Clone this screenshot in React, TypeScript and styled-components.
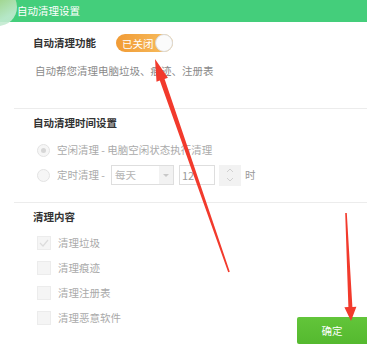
import React from 'react';
import styled, { createGlobalStyle } from 'styled-components';

const GlobalStyle = createGlobalStyle`
	html, body {
		margin: 0;
		padding: 0;
		background: #fff;
	}
	body {
		font-family: "Noto Sans CJK SC", "Noto Sans", sans-serif;
		font-size: 10.5px;
	}
`;

const Dialog = styled.div`
	position: relative;
	width: 367px;
	height: 353px;
	overflow: hidden;
	background: #fff;
	display: flex;
	flex-direction: column;
`;

const TitleBar = styled.div`
	position: relative;
	height: 22px;
	line-height: 21px;
	padding-left: 17px;
	background: #44ce7b;
	color: #fff;
	font-size: 10.5px;
	flex: none;
`;

const Blob = styled.div`
	position: absolute;
	left: -21px;
	top: -12px;
	width: 38px;
	height: 38px;
	border-radius: 50%;
	background: linear-gradient(150deg, #9cbf58 0%, #a9d58c 35%, #c2ead0 75%);
	opacity: 0.9;
`;

const TitleText = styled.span`
	position: relative;
`;

const Section = styled.div<{ $top: number; $bottom: number; $last?: boolean }>`
	margin-left: ${p => (p.$last ? 0 : 14)}px;
	padding: ${p => p.$top}px 0 ${p => p.$bottom}px 19px;
	border-bottom: ${p => (p.$last ? 'none' : '1px solid #ececec')};
`;

const SectionTitle = styled.div`
	font-size: 10.5px;
	line-height: 14px;
	font-weight: bold;
	color: #333;
`;

const SwitchRow = styled.div`
	display: flex;
	align-items: center;
	height: 18px;
	gap: 20px;
`;

const Switch = styled.div`
	position: relative;
	width: 57px;
	height: 18px;
	border-radius: 9px;
	background: linear-gradient(90deg, #f19b35, #f7bf62);
	box-sizing: border-box;
	display: flex;
	align-items: center;
	padding-left: 6px;
	color: #fff;
	font-size: 10.5px;
`;

const Knob = styled.div`
	position: absolute;
	right: 0;
	top: 0;
	width: 18px;
	height: 18px;
	box-sizing: border-box;
	border-radius: 50%;
	background: #fbfbfb;
	border: 1px solid #d9d9d9;
`;

const Desc = styled.div`
	margin-top: 12px;
	margin-left: 2px;
	line-height: 14px;
	color: #8a8a8a;
`;

const OptionList = styled.div<{ $mt: number; $gap: number }>`
	margin-top: ${p => p.$mt}px;
	margin-left: 4px;
	display: flex;
	flex-direction: column;
	gap: ${p => p.$gap}px;
`;

const Option = styled.div<{ $h: number }>`
	display: flex;
	align-items: center;
	height: ${p => p.$h}px;
	gap: 7px;
	color: #aaa;
	line-height: 14px;
`;

const Radio = styled.span<{ $on?: boolean }>`
	width: 13px;
	height: 13px;
	box-sizing: border-box;
	border-radius: 50%;
	border: 1px solid #e3e3e3;
	background: #f6f6f6;
	display: flex;
	align-items: center;
	justify-content: center;
	flex: none;
	&::after {
		content: '';
		width: 5px;
		height: 5px;
		border-radius: 50%;
		background: ${p => (p.$on ? '#d6d6d6' : 'transparent')};
	}
`;

const Check = styled.span`
	width: 14px;
	height: 14px;
	box-sizing: border-box;
	border: 1px solid #ececec;
	background: #f5f5f5;
	display: flex;
	align-items: center;
	justify-content: center;
	flex: none;
`;

const Select = styled.div`
	margin-left: -1px;
	width: 63px;
	height: 20px;
	box-sizing: border-box;
	border: 1px solid #dedede;
	display: flex;
	align-items: center;
	color: #b5b5b5;
	padding-left: 3px;
`;

const SelectText = styled.span`
	flex: 1;
`;

const SelectArrow = styled.span`
	width: 14px;
	height: 18px;
	background: #f2f2f2;
	display: flex;
	align-items: center;
	justify-content: center;
	&::after {
		content: '';
		border-left: 3px solid transparent;
		border-right: 3px solid transparent;
		border-top: 3px solid #c8c8c8;
	}
`;

const NumberBox = styled.div`
	margin-left: -2px;
	width: 36px;
	height: 20px;
	box-sizing: border-box;
	border: 1px solid #dedede;
	color: #9a9a9a;
	font-size: 11px;
	padding-left: 2px;
	display: flex;
	align-items: center;
`;

const Spinner = styled.div`
	margin-left: -3px;
	width: 22px;
	height: 21px;
	background: #f2f2f2;
	display: flex;
	flex-direction: column;
	align-items: center;
	justify-content: space-around;
	padding: 2px 0;
	box-sizing: border-box;
`;

const Hour = styled.span`
	margin-left: -3px;
	color: #999;
`;

const ContentRow = styled.div`
	flex: 1;
	display: flex;
	justify-content: space-between;
	align-items: flex-end;
`;

const ContentCol = styled.div`
	padding: 7px 0 29px 33px;
`;

const OkButton = styled.button`
	margin-bottom: 10px;
	width: 70px;
	height: 27px;
	border: none;
	border-radius: 2px 0 0 2px;
	background: linear-gradient(180deg, #62c53a, #55b92f);
	color: #fff;
	font-family: inherit;
	font-size: 10.5px;
	padding: 0;
`;

const ArrowLayer = styled.svg`
	position: absolute;
	left: 0;
	top: 0;
	pointer-events: none;
`;

const Chevron: React.FC<{ up?: boolean }> = ({ up }) => (
	<svg width="8" height="5" viewBox="0 0 8 5">
		<path d={up ? 'M1 4 L4 1 L7 4' : 'M1 1 L4 4 L7 1'} fill="none" stroke="#d0d0d0" strokeWidth="1" />
	</svg>
);

const App: React.FC = () => {
	const items = ['清理垃圾', '清理痕迹', '清理注册表', '清理恶意软件'];

	return (
		<Dialog>
			<GlobalStyle />
			<TitleBar>
				<Blob />
				<TitleText>自动清理设置</TitleText>
			</TitleBar>

			<Section $top={12} $bottom={30}>
				<SwitchRow>
					<SectionTitle>自动清理功能</SectionTitle>
					<Switch>
						已关闭
						<Knob />
					</Switch>
				</SwitchRow>
				<Desc>自动帮您清理电脑垃圾、痕迹、注册表</Desc>
			</Section>

			<Section $top={7} $bottom={16}>
				<SectionTitle>自动清理时间设置</SectionTitle>
				<OptionList $mt={10} $gap={4}>
					<Option $h={20}>
						<Radio $on />
						空闲清理 - 电脑空闲状态执行清理
					</Option>
					<Option $h={22}>
						<Radio />
						定时清理 -
						<Select>
							<SelectText>每天</SelectText>
							<SelectArrow />
						</Select>
						<NumberBox>12</NumberBox>
						<Spinner>
							<Chevron up />
							<Chevron />
						</Spinner>
						<Hour>时</Hour>
					</Option>
				</OptionList>
			</Section>

			<ContentRow>
				<ContentCol>
					<SectionTitle>清理内容</SectionTitle>
					<OptionList $mt={12} $gap={11}>
						{items.map((t, i) => (
							<Option key={t} $h={14}>
								<Check>
									{i === 0 && (
										<svg width="10" height="8" viewBox="0 0 10 8">
											<path d="M1 4 L4 7 L9 1" fill="none" stroke="#dcdcdc" strokeWidth="1.2" />
										</svg>
									)}
								</Check>
								{t}
							</Option>
						))}
					</OptionList>
				</ContentCol>
				<OkButton>确定</OkButton>
			</ContentRow>

			<ArrowLayer width="367" height="353" viewBox="0 0 367 353">
				<polygon
					points="155,59 167.9,77.8 164.6,79 229.8,271.7 228.2,272.3 159.8,80.6 156.5,81.8"
					fill="#f23a2c"
				/>
				<polygon
					points="351,321 356.4,306.7 352.4,306.9 346.8,213 345.2,213 348.4,307.1 344.4,307.3"
					fill="#f23a2c"
				/>
			</ArrowLayer>
		</Dialog>
	);
};

export default App;
